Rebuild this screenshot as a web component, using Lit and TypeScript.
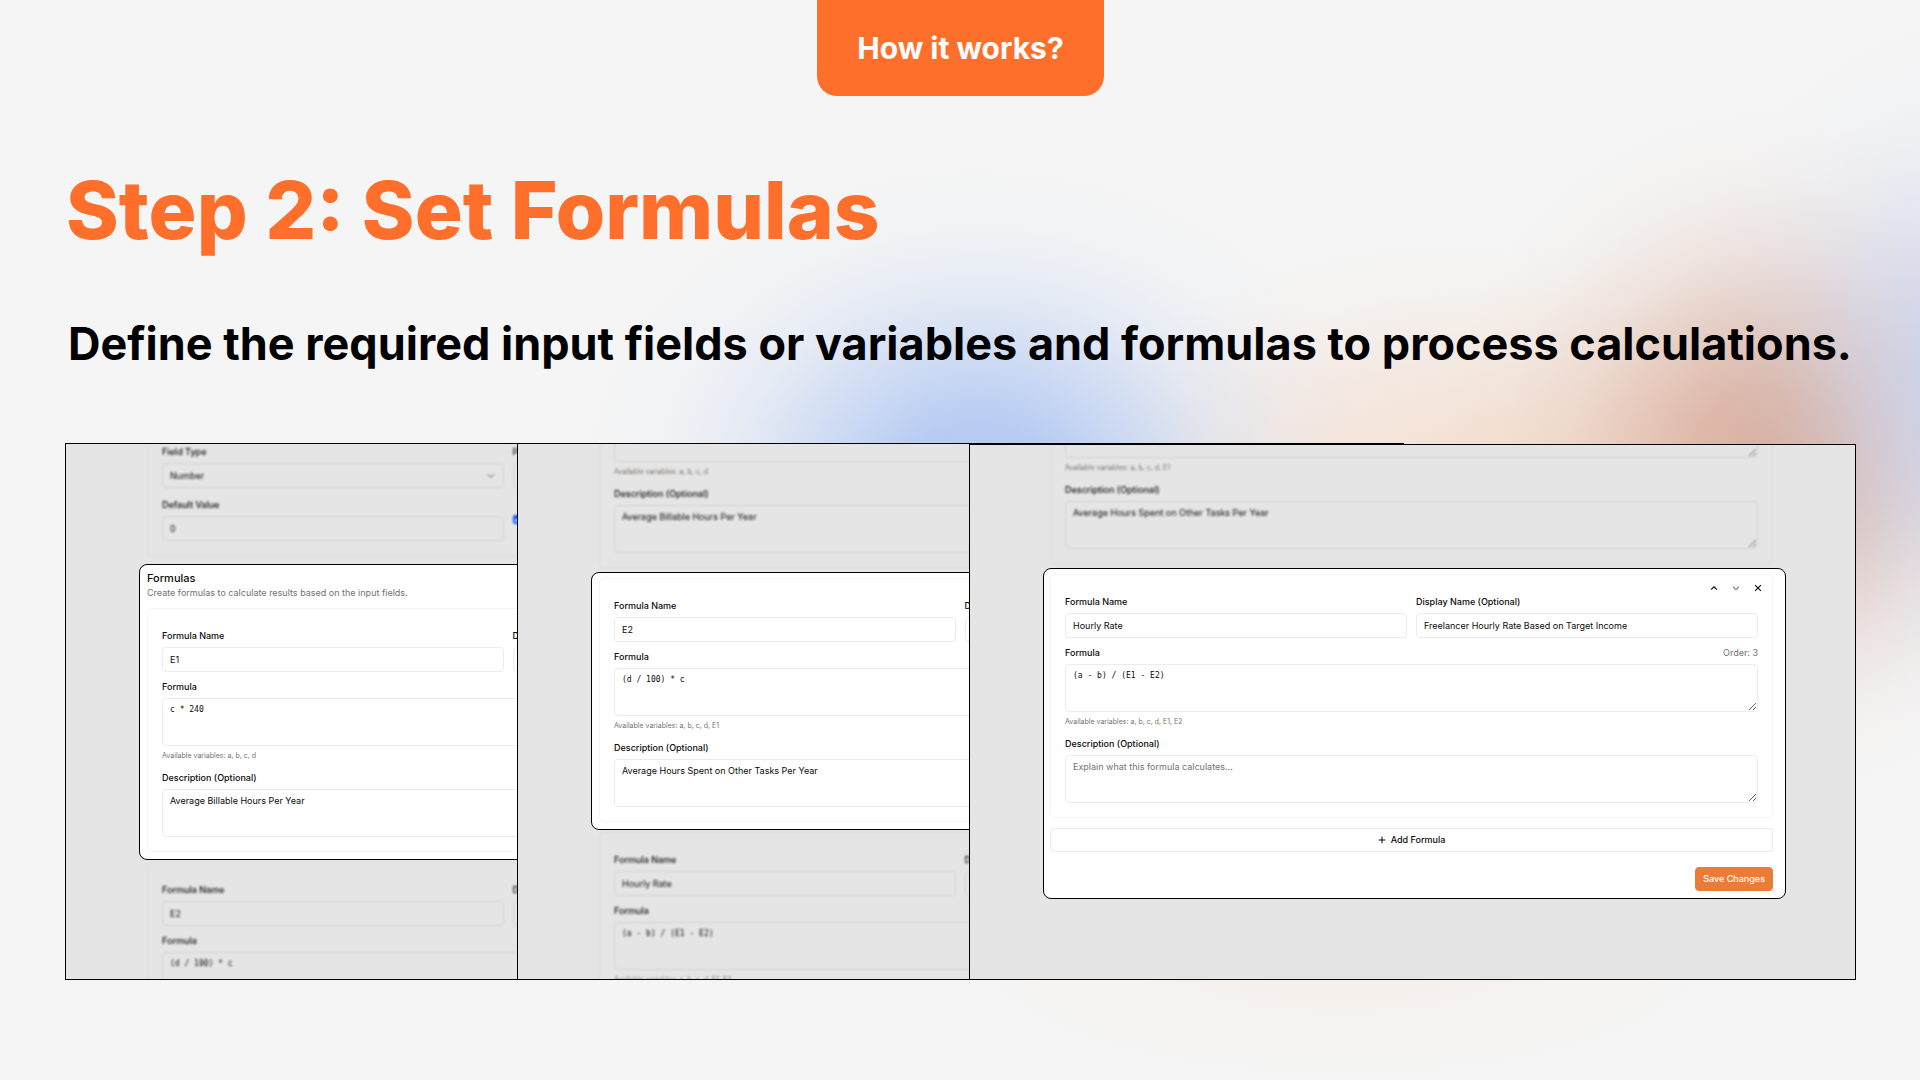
import { LitElement, html, css, nothing, svg } from "lit";
import { customElement, property } from "lit/decorators.js";

const font = css`Inter, "Liberation Sans", sans-serif`;
const mono = css`"DejaVu Sans Mono", "Liberation Mono", monospace`;

interface Formula {
  name: string;
  display: string;
  expression: string;
  variables: string;
  description: string;
  order: number;
}

const E1: Formula = {
  name: "E1",
  display: "",
  expression: "c * 240",
  variables: "a, b, c, d",
  description: "Average Billable Hours Per Year",
  order: 1,
};
const E2: Formula = {
  name: "E2",
  display: "",
  expression: "(d / 100) * c",
  variables: "a, b, c, d, E1",
  description: "Average Hours Spent on Other Tasks Per Year",
  order: 2,
};
const RATE: Formula = {
  name: "Hourly Rate",
  display: "Freelancer Hourly Rate Based on Target Income",
  expression: "(a - b) / (E1 - E2)",
  variables: "a, b, c, d, E1, E2",
  description: "",
  order: 3,
};

const controls = css`
  :host {
    display: block;
    border: 1px solid var(--edge, #f4f4f4);
    border-radius: 5px;
    padding: 14px;
    font: 9px/14px ${font};
    color: #0c0a09;
  }
  * {
    box-sizing: border-box;
  }
  .pair {
    display: grid;
    grid-template-columns: 1fr 1fr;
    gap: 9px;
  }
  .field {
    display: flex;
    flex-direction: column;
    gap: 4px;
    min-width: 0;
  }
  label {
    font-weight: 500;
  }
  input.text,
  select,
  textarea {
    display: block;
    width: 100%;
    margin: 0;
    border: 1px solid var(--line, #ececec);
    border-radius: 4px;
    background: transparent;
    color: inherit;
    font: inherit;
    outline: none;
  }
  input.text,
  select {
    height: 25px;
    padding: 0 7px;
  }
  textarea {
    height: 48px;
    padding: 4px 7px;
    resize: vertical;
  }
  textarea::placeholder {
    color: #78716c;
  }
`;

@customElement("formula-group")
class FormulaGroup extends LitElement {
  @property({ attribute: false }) formula: Formula = E1;

  static styles = [
    controls,
    css`
      :host {
        padding-top: 5px;
      }
      .tools {
        display: flex;
        justify-content: flex-end;
        gap: 8px;
        height: 15px;
        align-items: center;
        margin-right: -7px;
      }
      .tools button {
        display: flex;
        align-items: center;
        justify-content: center;
        width: 14px;
        height: 14px;
        padding: 0;
        border: 0;
        background: none;
        color: #0c0a09;
      }
      .tools button:disabled {
        opacity: 0.5;
      }
      .tools svg {
        width: 10px;
        height: 10px;
        fill: none;
        stroke: currentColor;
        stroke-width: 2.6;
      }
      .stack {
        display: flex;
        flex-direction: column;
        gap: 8px;
      }
      .head {
        display: flex;
        justify-content: space-between;
      }
      .order,
      .hint {
        color: #78716c;
      }
      .hint {
        margin: 0 0 2px;
        font-size: 7px;
        line-height: 11px;
      }
      .code {
        font-family: ${mono};
        font-size: 8px;
      }
    `,
  ];

  render() {
    const f = this.formula;
    return html`
      <div class="tools">
        <button aria-label="Move up" ?disabled=${f.order === 1}>
          <svg viewBox="0 0 24 24">${svg`<path d="m5 16 7-7 7 7" />`}</svg>
        </button>
        <button aria-label="Move down" ?disabled=${f.order === 3}>
          <svg viewBox="0 0 24 24">${svg`<path d="m5 9 7 7 7-7" />`}</svg>
        </button>
        <button aria-label="Remove">
          <svg viewBox="0 0 24 24">${svg`<path d="M5 5 19 19M19 5 5 19" />`}</svg>
        </button>
      </div>
      <div class="stack">
        <div class="pair">
          <div class="field">
            <label for="name">Formula Name</label>
            <input class="text" id="name" .value=${f.name} />
          </div>
          <div class="field">
            <label for="display">Display Name (Optional)</label>
            <input class="text" id="display" .value=${f.display} />
          </div>
        </div>
        <div class="field">
          <div class="head">
            <label for="expression">Formula</label>
            <span class="order">Order: ${f.order}</span>
          </div>
          <textarea class="code" id="expression" .value=${f.expression}></textarea>
          <p class="hint">Available variables: ${f.variables}</p>
        </div>
        <div class="field">
          <label for="description">Description (Optional)</label>
          <textarea
            id="description"
            placeholder="Explain what this formula calculates..."
            .value=${f.description}
          ></textarea>
        </div>
      </div>
    `;
  }
}

@customElement("input-group")
class InputGroup extends LitElement {
  static styles = [
    controls,
    css`
      :host {
        padding-bottom: 15px;
      }
      .stack {
        display: flex;
        flex-direction: column;
        gap: 10px;
      }
      .select {
        display: grid;
        align-items: center;
      }
      .select > * {
        grid-area: 1 / 1;
      }
      select {
        appearance: none;
      }
      .select svg {
        justify-self: end;
        width: 10px;
        height: 10px;
        margin-right: 8px;
        fill: none;
        stroke: #444;
        stroke-width: 2;
        pointer-events: none;
      }
      .check {
        display: flex;
        align-items: center;
        gap: 5px;
      }
      .check input {
        width: 9px;
        height: 9px;
        margin: 0;
        accent-color: #0b57ff;
      }
    `,
  ];

  render() {
    return html`
      <div class="stack">
        <div class="pair">
          <div class="field">
            <label for="type">Field Type</label>
            <div class="select">
              <select id="type">
                <option>Number</option>
              </select>
              <svg viewBox="0 0 24 24">${svg`<path d="m5 8 7 7 7-7" />`}</svg>
            </div>
          </div>
          <div class="field">
            <label for="placeholder">Placeholder</label>
            <input class="text" id="placeholder" />
          </div>
        </div>
        <div class="pair">
          <div class="field">
            <label for="default">Default Value</label>
            <input class="text" id="default" value="0" />
          </div>
          <div class="check">
            <input type="checkbox" id="required" aria-label="Required" checked />
          </div>
        </div>
      </div>
    `;
  }
}

@customElement("app-root")
class AppRoot extends LitElement {
  static styles = css`
    :host {
      display: block;
      font-family: ${font};
    }
    * {
      box-sizing: border-box;
    }
    .page {
      min-height: 100vh;
      display: flex;
      flex-direction: column;
      overflow: hidden;
      padding: 0 64px 64px 65px;
      background:
        radial-gradient(
          ellipse 16% 34% at 103% 35%,
          rgb(190 203 238 / 0.75) 0%,
          rgb(190 203 238 / 0.62) 20%,
          rgb(190 203 238 / 0.4) 40%,
          rgb(190 203 238 / 0.18) 60%,
          rgb(190 203 238 / 0.05) 80%,
          rgb(190 203 238 / 0) 100%
        ),
        radial-gradient(
          ellipse 17% 32% at 92% 42%,
          rgb(214 164 143 / 0.86) 0%,
          rgb(214 164 143 / 0.73) 20%,
          rgb(214 164 143 / 0.46) 40%,
          rgb(214 164 143 / 0.2) 60%,
          rgb(214 164 143 / 0.05) 80%,
          rgb(214 164 143 / 0) 100%
        ),
        radial-gradient(
          ellipse 21% 30% at 51% 45%,
          rgb(165 192 242 / 0.88) 0%,
          rgb(165 192 242 / 0.76) 20%,
          rgb(165 192 242 / 0.48) 40%,
          rgb(165 192 242 / 0.2) 60%,
          rgb(165 192 242 / 0.05) 80%,
          rgb(165 192 242 / 0) 100%
        ),
        radial-gradient(
          ellipse 22% 22% at 77% 44%,
          rgb(243 216 198 / 0.8) 0%,
          rgb(243 216 198 / 0.48) 40%,
          rgb(243 216 198 / 0.1) 80%,
          rgb(243 216 198 / 0) 100%
        ),
        radial-gradient(
          ellipse 20% 12% at 70% 88%,
          rgb(247 232 222 / 0.6) 0%,
          rgb(247 232 222 / 0.3) 45%,
          rgb(247 232 222 / 0) 100%
        ),
        #f5f5f5;
    }
    .tab {
      align-self: center;
      padding: 30px 40px;
      border-radius: 0 0 20px 20px;
      background: #ff6f2c;
      color: #fff;
      font-size: 30px;
      line-height: 36px;
      font-weight: 700;
    }
    h1 {
      margin: 66px 0 0 1px;
      color: #ff6f2c;
      font-size: 80px;
      line-height: 96px;
      font-weight: 800;
    }
    h2 {
      margin: 58px 0 0 3px;
      font-size: 45px;
      line-height: 56px;
      font-weight: 700;
      white-space: nowrap;
      color: #000;
    }
    .gallery {
      display: grid;
      grid-template-columns: 452fr 435fr 17fr 435fr 452fr;
      align-items: end;
      margin-top: 71px;
    }
    .panel,
    .back {
      grid-row: 1;
      min-width: 0;
      overflow: hidden;
      border: 1px solid #000;
      background: #e5e5e5;
    }
    .back {
      grid-column: 2 / 5;
      aspect-ratio: 887 / 537;
    }
    .first,
    .second {
      border-right: 0;
      aspect-ratio: 452 / 537;
    }
    .first {
      grid-column: 1;
    }
    .second {
      grid-column: 2 / 4;
    }
    .third {
      grid-column: 4 / 6;
      aspect-ratio: 887 / 536;
      z-index: 1;
    }
    .sheet {
      display: flex;
      flex-direction: column;
      width: 100%;
      height: 100%;
    }
    .first .sheet,
    .second .sheet {
      width: calc(100% * 885 / 451);
    }
    .before,
    .after {
      flex: 1 1 0;
      min-height: 0;
      display: flex;
      flex-direction: column;
      overflow: hidden;
      padding: 0 82px 0 81px;
      --line: #d4d4d4;
      --edge: #dcdcdc;
    }
    .before {
      flex: 0 0 120px;
      justify-content: flex-end;
    }
    .second .before {
      flex-basis: 128px;
    }
    .third .before {
      flex-basis: 123px;
    }
    .third .before,
    .third .after {
      padding-left: 80px;
    }
    .soft {
      flex: none;
      filter: blur(1px);
    }
    .before .soft {
      margin-bottom: 4px;
    }
    .first .before .soft {
      margin-bottom: 7px;
    }
    .after .soft {
      margin-top: 2px;
    }
    .card {
      flex: none;
      margin: 0 69px 0 73px;
      padding: 5px 12px 7px 7px;
      border: 1px solid #000;
      border-radius: 8px;
      background: #fff;
    }
    .card h3 {
      margin: 0;
      font-size: 11px;
      line-height: 16px;
      font-weight: 500;
      color: #0c0a09;
    }
    .card p {
      margin: 0 0 8px;
      font-size: 9px;
      line-height: 14px;
      color: #78716c;
    }
    .third .card {
      padding-left: 6px;
    }
    .actions {
      display: flex;
      flex-direction: column;
      gap: 15px;
      margin-top: 10px;
    }
    .actions button {
      display: flex;
      align-items: center;
      justify-content: center;
      gap: 5px;
      height: 24px;
      padding: 0 7px;
      border: 1px solid #ececec;
      border-radius: 4px;
      background: #fff;
      color: #0c0a09;
      font: 500 9px/14px ${font};
    }
    .actions svg {
      width: 8px;
      height: 8px;
      fill: none;
      stroke: currentColor;
      stroke-width: 3;
    }
    .actions .save {
      align-self: flex-end;
      border-color: #ea7c37;
      background: #ea7c37;
      color: #fff;
    }
  `;

  render() {
    return html`
      <main class="page">
        <div class="tab">How it works?</div>
        <h1>Step 2: Set Formulas</h1>
        <h2>Define the required input fields or variables and formulas to process calculations.</h2>
        <div class="gallery">
          <div class="back"></div>
          ${this.panel("first", html`<input-group class="soft"></input-group>`, E1, E2)}
          ${this.panel("second", this.soft(E1), E2, RATE)}
          ${this.panel("third", this.soft(E2), RATE)}
        </div>
      </main>
    `;
  }

  private soft(formula: Formula) {
    return html`<formula-group class="soft" .formula=${formula}></formula-group>`;
  }

  private panel(position: string, before: unknown, current: Formula, next?: Formula) {
    return html`
      <section class="panel ${position}">
        <div class="sheet">
          <div class="before">${before}</div>
          <div class="card">
            ${position === "first"
              ? html`<h3>Formulas</h3>
                  <p>Create formulas to calculate results based on the input fields.</p>`
              : nothing}
            <formula-group .formula=${current}></formula-group>
            ${next
              ? nothing
              : html`<div class="actions">
                  <button>
                    <svg viewBox="0 0 24 24">${svg`<path d="M12 2v20M2 12h20" />`}</svg>
                    Add Formula
                  </button>
                  <button class="save">Save Changes</button>
                </div>`}
          </div>
          <div class="after">${next ? this.soft(next) : nothing}</div>
        </div>
      </section>
    `;
  }
}
